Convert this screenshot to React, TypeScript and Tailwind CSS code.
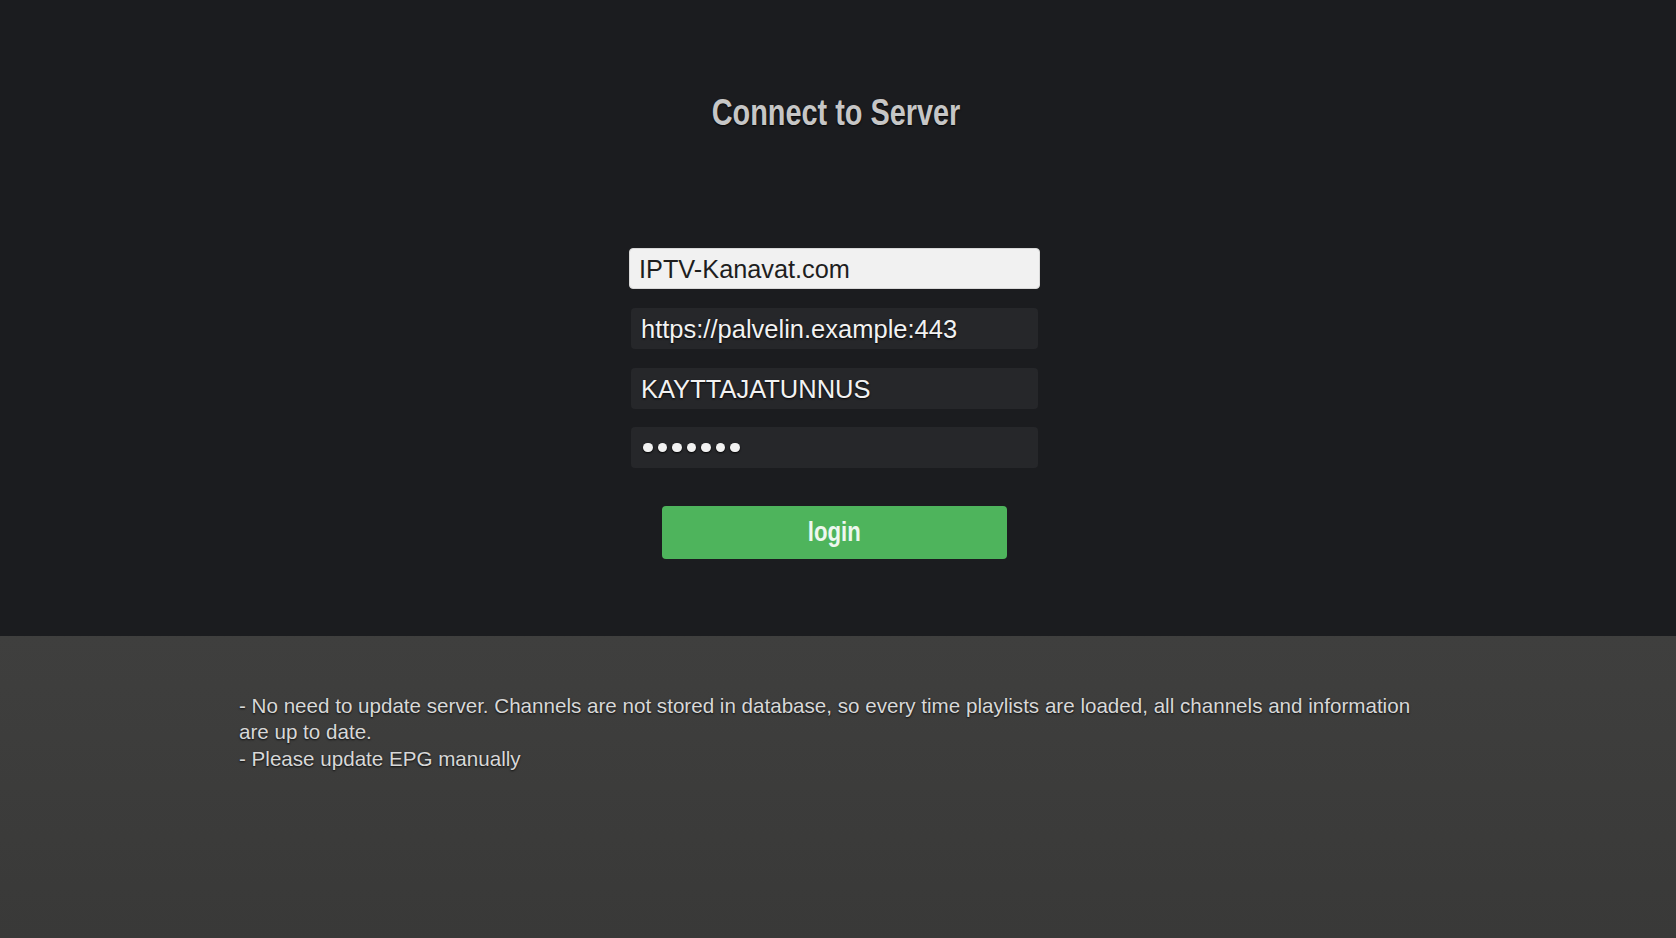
import React from "react";

export default function App() {
  return (
    <div className="w-[1676px] h-[938px] flex flex-col overflow-hidden" style={{ fontFamily: '"Liberation Sans", Arial, sans-serif' }}>
      <div className="h-[636px] bg-[#1b1c1f] flex flex-col items-center pt-[94px] pr-[7px]">
        <h1 className="text-[37px] leading-none font-bold text-[#c6c6c6] [text-shadow:0_1px_2px_rgba(0,0,0,0.9)] pl-[3px] scale-x-[0.78] whitespace-nowrap">
          Connect to Server
        </h1>
        <div className="mt-[117px] flex flex-col items-center">
          <div className="w-[411px] h-[41px] rounded-[4px] bg-[#f1f1f1] border border-[#d8d8d8] flex items-center pl-[9px] pt-[3px] text-[25.3px] text-[#1e1e1e]">
            IPTV-Kanavat.com
          </div>
          <div className="mt-[19px] w-[407px] h-[41px] rounded-[4px] bg-[#26272a] flex items-center pl-[10px] pt-[2px] text-[25.5px] text-[#f2f2f2] [text-shadow:0_1px_2px_rgba(0,0,0,0.9)]">
            https://palvelin.example:443
          </div>
          <div className="mt-[19px] w-[407px] h-[41px] rounded-[4px] bg-[#26272a] flex items-center pl-[10px] pt-[2px] text-[25.5px] text-[#f2f2f2] [text-shadow:0_1px_2px_rgba(0,0,0,0.9)]">
            KAYTTAJATUNNUS
          </div>
          <div className="mt-[18px] w-[407px] h-[41px] rounded-[4px] bg-[#26272a] flex items-center gap-[5px] pl-[12px]">
            {[0, 1, 2, 3, 4, 5, 6].map((i) => (
              <span key={i} className="w-[9.5px] h-[9.5px] rounded-full bg-[#f2f2f2] shadow-[0_1px_2px_rgba(0,0,0,0.9)]" />
            ))}
          </div>
          <button className="mt-[38px] w-[345px] h-[53px] rounded-[4px] bg-[#4eb45c] flex items-center justify-center">
            <span className="text-[27px] font-bold text-[#eef7ef] scale-x-[0.82] inline-block">login</span>
          </button>
        </div>
      </div>
      <div className="flex-1 bg-gradient-to-b from-[#3f3f3e] to-[#393938] pt-[57px] pl-[239px]">
        <div className="w-[1190px] text-[20.6px] leading-[26.3px] text-[#d8d8d8] [text-shadow:0_1px_2px_rgba(0,0,0,0.8)]">
          <p>- No need to update server. Channels are not stored in database, so every time playlists are loaded, all channels and information are up to date.</p>
          <p>- Please update EPG manually</p>
        </div>
      </div>
    </div>
  );
}
